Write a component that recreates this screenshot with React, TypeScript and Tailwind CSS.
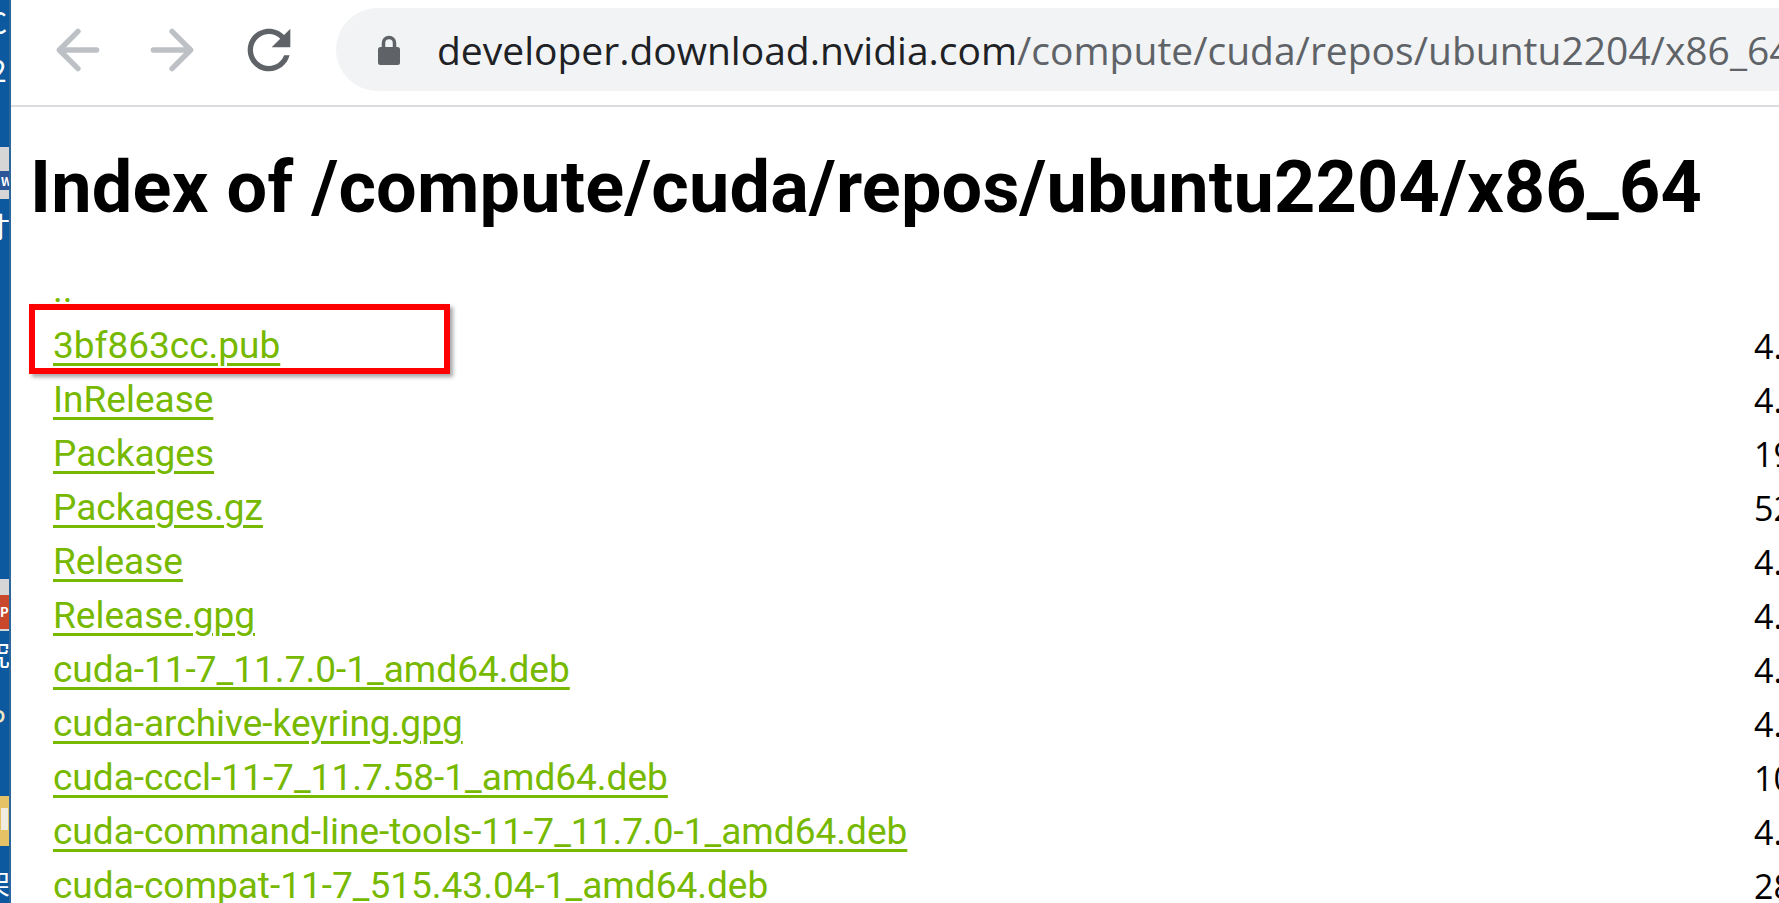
import React from 'react';

type Row = { name: string; size: string };

const rows: Row[] = [
  { name: '3bf863cc.pub', size: '4.2 KB' },
  { name: 'InRelease', size: '4.1 KB' },
  { name: 'Packages', size: '195 KB' },
  { name: 'Packages.gz', size: '52 KB' },
  { name: 'Release', size: '4.0 KB' },
  { name: 'Release.gpg', size: '4.0 KB' },
  { name: 'cuda-11-7_11.7.0-1_amd64.deb', size: '4.4 KB' },
  { name: 'cuda-archive-keyring.gpg', size: '4.3 KB' },
  { name: 'cuda-cccl-11-7_11.7.58-1_amd64.deb', size: '10 MB' },
  { name: 'cuda-command-line-tools-11-7_11.7.0-1_amd64.deb', size: '4.5 KB' },
  { name: 'cuda-compat-11-7_515.43.04-1_amd64.deb', size: '28 MB' },
];

// what is left of the desktop behind the browser window
function DesktopStrip() {
  return (
    <div className="flex w-[11px] shrink-0 flex-col overflow-hidden border-r-2 border-[#2c679c] bg-[#0c599f] font-['Noto_Sans_CJK_JP',sans-serif] text-white">
      <div className="mt-[4px] h-[34px] -ml-[12px] text-[30px] leading-[34px]">C</div>
      <div className="mt-[14px] h-[34px] -ml-[10px] text-[30px] leading-[34px]">2</div>
      <div className="mt-[61px] h-[52px] shrink-0 bg-[#d6d6d6] pt-[24px]">
        <div className="h-[19px] bg-[#2b579a] pl-[1px] text-[12px] font-bold leading-[19px]">W</div>
      </div>
      <div className="mt-[12px] h-[30px] -ml-[18px] text-[28px] leading-[30px]">寸</div>
      <div className="mt-[338px] h-[52px] shrink-0 bg-[#d6d6d6] pt-[16px]">
        <div className="h-[34px] bg-[#c9482b] text-[13px] font-bold leading-[34px]">P</div>
      </div>
      <div className="mt-[8px] h-[30px] -ml-[18px] text-[28px] leading-[30px]">究</div>
      <div className="mt-[34px] h-[32px] -ml-[12px] text-[28px] leading-[32px] text-[#f3e6c2]">P</div>
      <div className="mt-[61px] h-[50px] shrink-0 bg-[#e6c266] px-[1px] pt-[12px]">
        <div className="h-[22px] bg-[#f1ece0]" />
      </div>
      <div className="mt-[22px] h-[30px] -ml-[18px] text-[28px] leading-[30px]">架</div>
    </div>
  );
}

function Toolbar() {
  return (
    <div className="flex h-[105px] shrink-0 items-start overflow-hidden bg-white pl-[35px]">
      <svg className="mt-[18px] shrink-0" width="64" height="64" viewBox="0 0 24 24" fill="none" stroke="#bdc1c6" strokeWidth="2" strokeLinecap="round" strokeLinejoin="round">
        <path d="M19 12H5M12 5l-7 7 7 7" />
      </svg>
      <svg className="ml-[30px] mt-[18px] shrink-0" width="64" height="64" viewBox="0 0 24 24" fill="none" stroke="#bdc1c6" strokeWidth="2" strokeLinecap="round" strokeLinejoin="round">
        <path d="M5 12h14M12 5l7 7-7 7" />
      </svg>
      <svg className="ml-[33px] mt-[18px] shrink-0" width="64" height="64" viewBox="0 0 24 24" fill="#5f6368">
        <path d="M17.65 6.35C16.2 4.9 14.21 4 12 4c-4.42 0-7.99 3.58-7.99 8s3.57 8 7.99 8c3.73 0 6.84-2.55 7.73-6h-2.08c-.82 2.33-3.04 4-5.65 4-3.31 0-6-2.69-6-6s2.69-6 6-6c1.66 0 3.14.69 4.22 1.78L13 11h7V4l-2.35 2.35z" />
      </svg>
      <div className="ml-[35px] mt-[8px] flex h-[83px] w-[1600px] shrink-0 items-center rounded-full bg-[#f1f3f4] pl-[42px]">
        <svg width="22" height="31" viewBox="0 0 22 31" className="shrink-0">
          <path d="M5.5 14V9a5.5 5.5 0 0 1 11 0v5" fill="none" stroke="#5f6368" strokeWidth="3.5" />
          <rect x="0" y="13" width="22" height="18" rx="2.5" fill="#5f6368" />
        </svg>
        <div className="ml-[37px] whitespace-nowrap font-['Open_Sans',sans-serif] text-[39px] leading-none">
          <span className="text-[#202124]">developer.download.nvidia.com</span>
          <span className="text-[#5f6368]">/compute/cuda/repos/ubuntu2204/x86_64/</span>
        </div>
      </div>
    </div>
  );
}

const linkCls = 'text-[#76b900] underline decoration-[3px] underline-offset-[5px]';

export default function App() {
  return (
    <div className="relative flex h-[903px] w-[1779px] overflow-hidden bg-white">
      <DesktopStrip />
      <div className="flex min-w-0 flex-1 flex-col">
        <Toolbar />
        <div className="h-[2px] shrink-0 bg-[#dadce0]" />
        <main className="pl-[19px] pt-[45px]">
          <h1 className="whitespace-nowrap font-['Roboto',sans-serif] text-[72px] font-bold leading-[72px] tracking-[0.2px] text-black">
            Index of /compute/cuda/repos/ubuntu2204/x86_64
          </h1>
          <div className="mt-[39px] pl-[23px] font-['Roboto',sans-serif] text-[37px]">
            <div className="h-[56px] whitespace-nowrap leading-[54px]">
              <a href="#" className="text-[#76b900] underline decoration-[3px] underline-offset-[4px]">..</a>
            </div>
            {rows.map((r) => (
              <div key={r.name} className="flex h-[54px] whitespace-nowrap leading-[54px]">
                <div className="w-[1701px] shrink-0">
                  <a href="#" className={linkCls}>
                    {r.name}
                  </a>
                </div>
                <div className="font-['Open_Sans',sans-serif] text-[34px] text-black">{r.size}</div>
              </div>
            ))}
          </div>
        </main>
      </div>
      {/* annotation drawn over the screenshot */}
      <div className="pointer-events-none absolute left-[29px] top-[304px] h-[70px] w-[421px] border-[6px] border-[#ff0000] shadow-[3px_3px_4px_rgba(0,0,0,0.35)]" />
    </div>
  );
}
